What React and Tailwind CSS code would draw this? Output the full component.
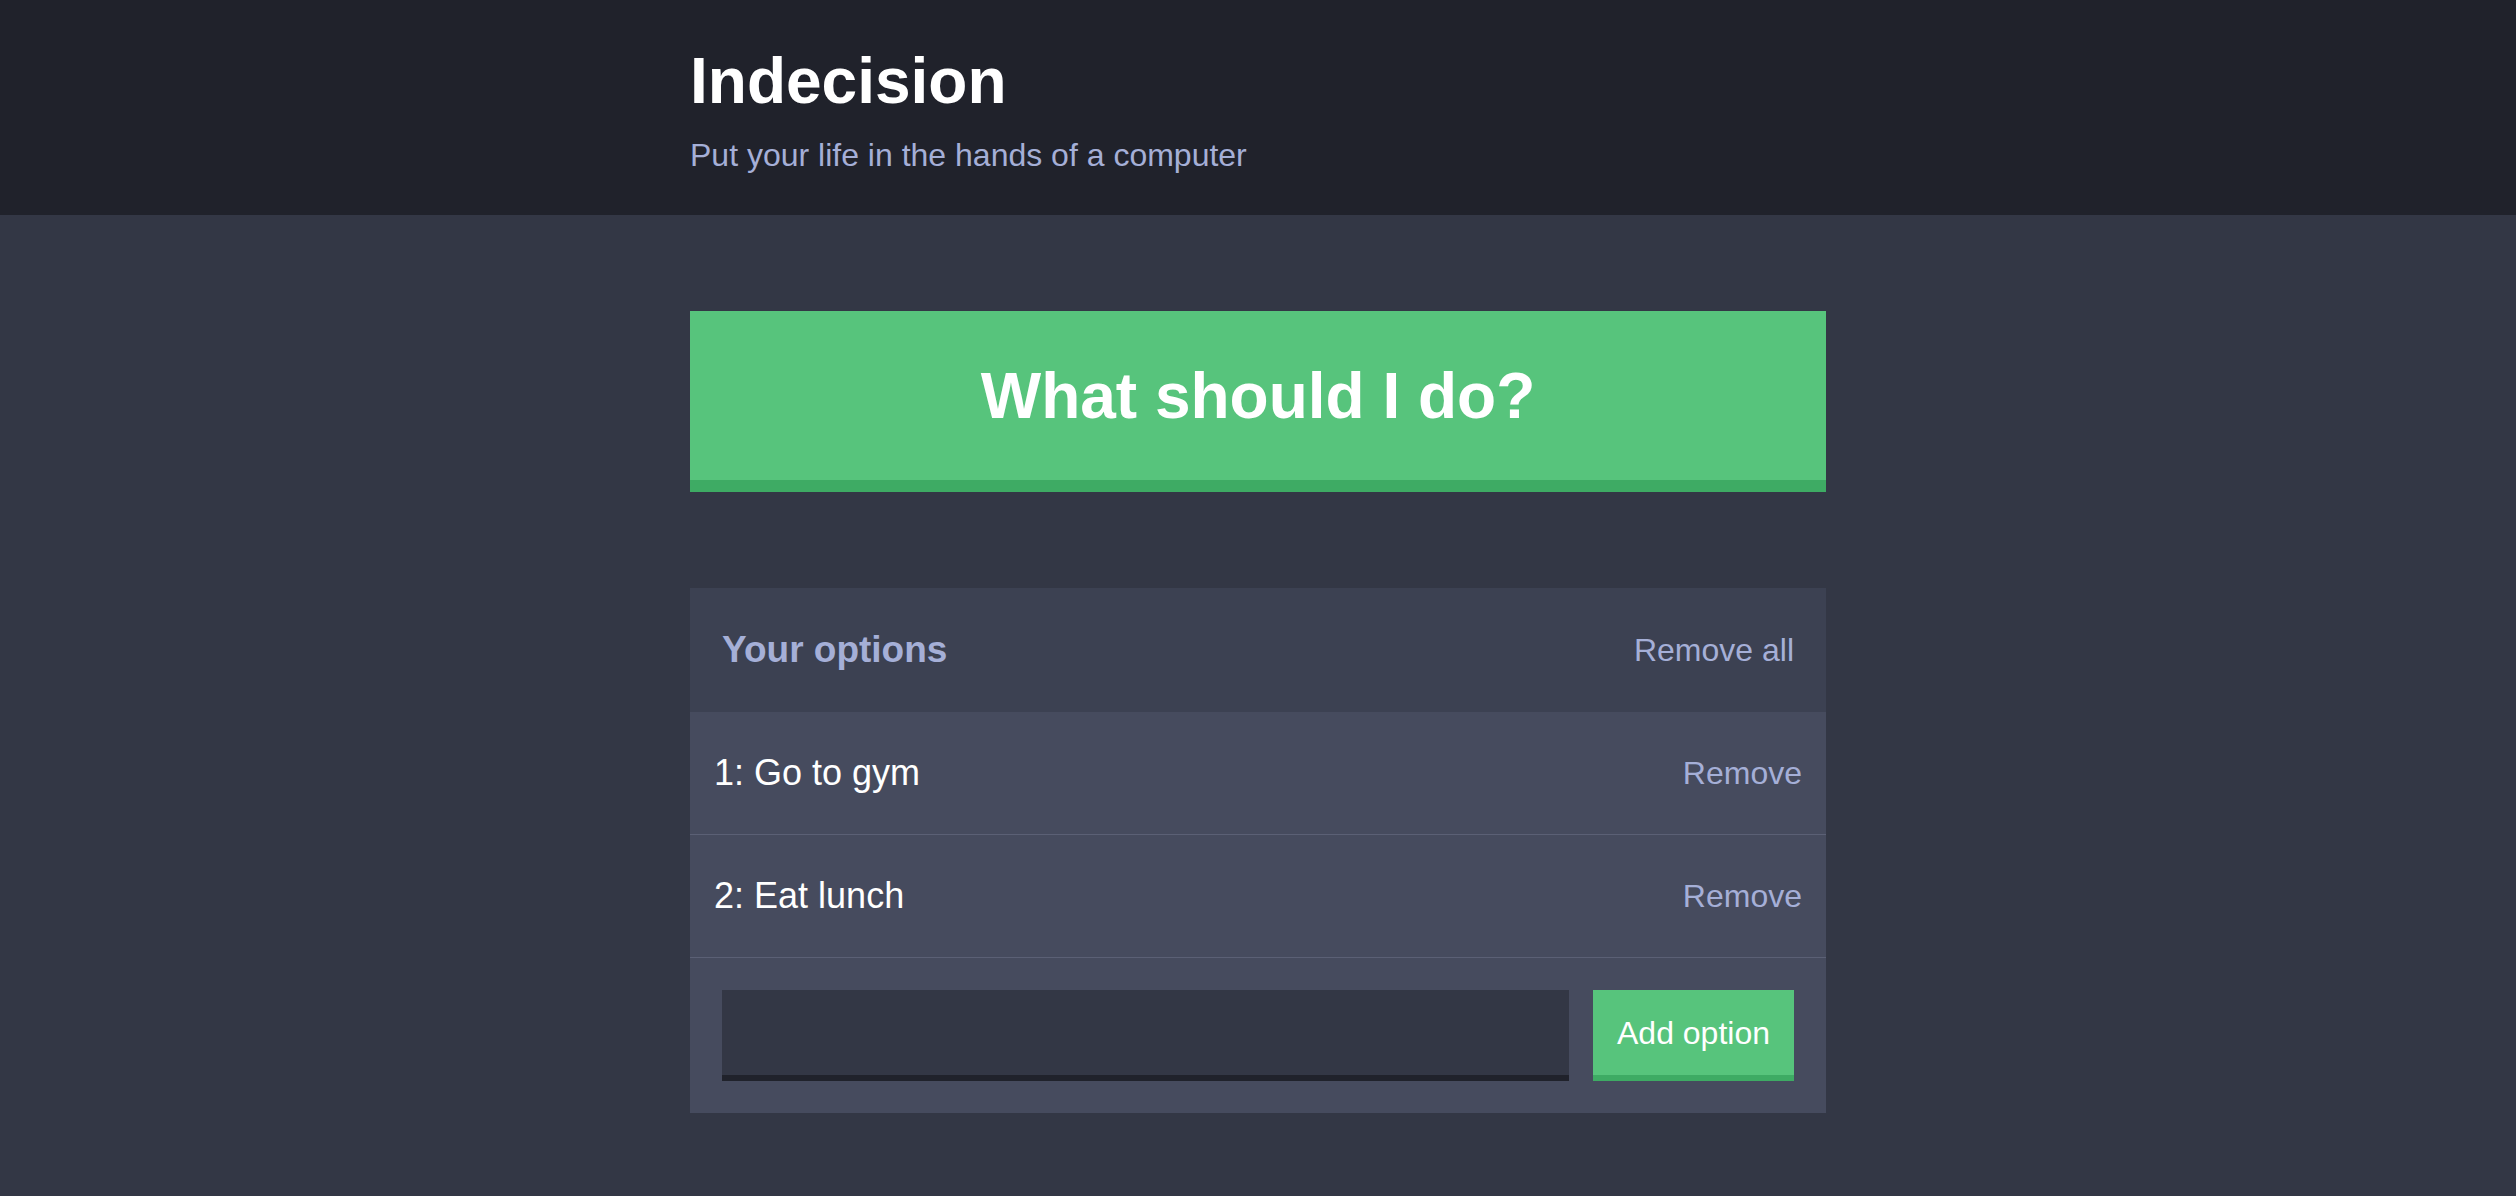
import { useState } from "react";

const font = { fontFamily: '"Liberation Sans", Arial, sans-serif' };

function Header() {
  return (
    <header className="bg-[#20222b] h-[215px]">
      <div className="w-[1136px] mx-auto pt-[44px]">
        <h1 className="text-[64px] leading-[74px] font-bold text-white m-0">Indecision</h1>
        <h2 className="text-[32px] leading-[37px] font-normal text-[#a5afd7] mt-[19px]">
          Put your life in the hands of a computer
        </h2>
      </div>
    </header>
  );
}

function Option({ index, text }) {
  return (
    <div className="flex items-center justify-between h-[123px] px-6 border-b border-[#5b6075]">
      <p className="text-[36px] text-white">
        {index}: {text}
      </p>
      <button className="text-[32px] text-[#a5afd7] bg-transparent">Remove</button>
    </div>
  );
}

export default function App() {
  const [options] = useState(["Go to gym", "Eat lunch"]);

  return (
    <div className="min-h-screen bg-[#333745]" style={font}>
      <Header />
      <main className="w-[1136px] mx-auto pt-24 pb-20">
        <button className="w-full h-[181px] bg-[#57c47c] border-b-[12px] border-[#3eab64] text-white text-[64px] font-bold">
          What should I do?
        </button>

        <div className="mt-24 bg-[#464b5e]">
          <div className="flex items-center justify-between h-[124px] px-8 bg-[#3c4152]">
            <h3 className="text-[37px] font-bold text-[#a5afd7]">Your options</h3>
            <button className="text-[32px] text-[#a5afd7] bg-transparent">Remove all</button>
          </div>

          {options.map((opt, i) => (
            <Option key={i} index={i + 1} text={opt} />
          ))}

          <form className="flex gap-6 p-8" onSubmit={(e) => e.preventDefault()}>
            <input
              type="text"
              className="flex-1 h-[91px] bg-[#333745] border-b-[6px] border-[#20222b] outline-none text-white text-[32px] px-4"
            />
            <button className="h-[91px] px-6 bg-[#57c47c] border-b-[6px] border-[#3eab64] text-white text-[32px]">
              Add option
            </button>
          </form>
        </div>
      </main>
    </div>
  );
}
